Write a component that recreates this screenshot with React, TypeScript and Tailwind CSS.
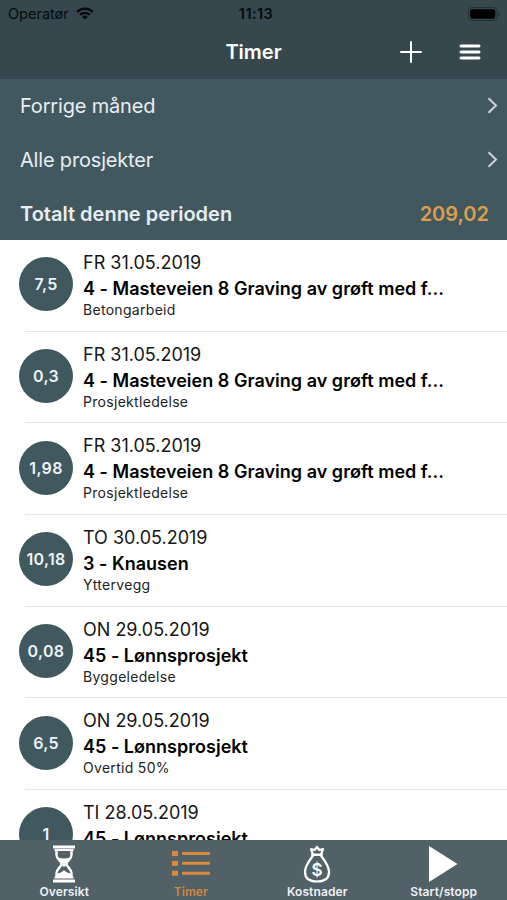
import { useState } from 'react';

type TimeEntry = {
  id: number;
  hours: string;
  date: string;
  project: string;
  activity: string;
};

const entries: TimeEntry[] = [
  { id: 1, hours: '7,5', date: 'FR 31.05.2019', project: '4 - Masteveien 8 Graving av grøft med f...', activity: 'Betongarbeid' },
  { id: 2, hours: '0,3', date: 'FR 31.05.2019', project: '4 - Masteveien 8 Graving av grøft med f...', activity: 'Prosjektledelse' },
  { id: 3, hours: '1,98', date: 'FR 31.05.2019', project: '4 - Masteveien 8 Graving av grøft med f...', activity: 'Prosjektledelse' },
  { id: 4, hours: '10,18', date: 'TO 30.05.2019', project: '3 - Knausen', activity: 'Yttervegg' },
  { id: 5, hours: '0,08', date: 'ON 29.05.2019', project: '45 - Lønnsprosjekt', activity: 'Byggeledelse' },
  { id: 6, hours: '6,5', date: 'ON 29.05.2019', project: '45 - Lønnsprosjekt', activity: 'Overtid 50%' },
  { id: 7, hours: '1', date: 'TI 28.05.2019', project: '45 - Lønnsprosjekt', activity: '' },
];

function WifiIcon() {
  return (
    <svg width="18" height="13" viewBox="0 0 18 13" fill="none" stroke="#060b0d" strokeWidth="2.4">
      <path d="M1.2 4.9a11 11 0 0 1 15.6 0" />
      <path d="M4.1 7.9a7 7 0 0 1 9.8 0" />
      <path d="M9 12.6 6.2 9.9a4 4 0 0 1 5.6 0z" fill="#060b0d" stroke="none" />
    </svg>
  );
}

function BatteryIcon() {
  return (
    <svg width="33" height="14" viewBox="0 0 33 14">
      <rect x="0.5" y="0.5" width="28.5" height="13" rx="3.5" fill="none" stroke="#223035" />
      <rect x="2.2" y="2.2" width="25" height="9.6" rx="2" fill="#000" />
      <path d="M30.5 5v4c1-.3 1.6-1 1.6-2s-.6-1.7-1.6-2z" fill="#223035" />
    </svg>
  );
}

function Chevron() {
  return (
    <svg className="mb-px" width="11" height="17" viewBox="0 0 11 17" fill="none" stroke="#cbd2dc" strokeWidth="2">
      <path d="M1.5 1.2 9 8.5l-7.5 7.3" />
    </svg>
  );
}

function HourglassIcon() {
  return (
    <svg width="24" height="38" viewBox="0 0 24 38" fill="none" stroke="#fff">
      <path d="M1 2h22M1 36h22" strokeWidth="3" />
      <path d="M2.5 5h19M2.5 32.5h19" strokeWidth="1.8" />
      <path d="M4.5 5v5c0 4.500 5 6 5 9s-5 4.500-5 9v4M19.500 5v5c0 4.500-5 6-5 9s5 4.500 5 9v4" strokeWidth="2.4" />
      <path d="M6.500 12.800c3.500.8 7.500.8 11 0-1 2.700-3.800 4-3.800 6.200v2.500h-3.400V19c0-2.200-2.800-3.500-3.800-6.200z" fill="#fff" stroke="none" />
      <path d="M4.500 32.500v-4c3 0 5.500-1.500 7.500-3.500 2 2 4.500 3.500 7.500 3.500v4z" fill="#fff" stroke="none" />
    </svg>
  );
}

function ListIcon() {
  return (
    <svg width="38" height="26" viewBox="0 0 38 26" fill="#d98a3d">
      <rect x="0" y="0" width="6" height="5" />
      <rect x="0" y="9.8" width="6" height="5" />
      <rect x="0" y="19.7" width="6" height="5" />
      <rect x="10" y="1" width="28" height="3" rx="1" />
      <rect x="10" y="10.8" width="28" height="3" rx="1" />
      <rect x="10" y="20.7" width="28" height="3" rx="1" />
    </svg>
  );
}

function MoneyBagIcon() {
  return (
    <svg width="28" height="38" viewBox="0 0 28 38" fill="none" stroke="#fff" strokeWidth="2.2" strokeLinejoin="round" strokeLinecap="round">
      <path d="M9.800 9 8 4.200l3.700.8L14 1.800 16.300 5l3.700-.8L18.200 9" />
      <path d="M9.200 9.800h9.600" strokeWidth="2.4" />
      <path d="M9.800 11C6.500 15.500 2 20.500 2 27c0 6.500 4 9.500 12 9.500S26 33.500 26 27c0-6.500-4.500-11.500-7.800-16" />
      <text x="14" y="30.5" textAnchor="middle" fontSize="17" fontWeight="600" fill="#fff" stroke="none">$</text>
    </svg>
  );
}

function PlayIcon() {
  return (
    <svg width="30" height="38" viewBox="0 0 30 38" fill="#fff">
      <path d="M0 1v36l28.500-18z" />
    </svg>
  );
}

const tabs = [
  { name: 'Oversikt', icon: <HourglassIcon /> },
  { name: 'Timer', icon: <ListIcon /> },
  { name: 'Kostnader', icon: <MoneyBagIcon /> },
  { name: 'Start/stopp', icon: <PlayIcon /> },
];

function EntryRow({ entry }: { entry: TimeEntry }) {
  return (
    <li className="h-[91.7px] shrink-0 pl-[19px]">
      <div className="flex h-full">
        <div className="mt-[17.3px] flex h-[54px] w-[54px] shrink-0 items-center justify-center rounded-full bg-[#41585f] text-base font-semibold tracking-[0.3px] text-[#edf3f8]">
          {entry.hours}
        </div>
        <div className="ml-[10px] whitespace-nowrap pt-[10px] text-black">
          <p className="text-[18px] leading-[26px] text-[#161616]">{entry.date}</p>
          <p className="text-[18px] font-semibold leading-[25px] tracking-[0.02px]">{entry.project}</p>
          <p className="text-[14px] leading-[18px] tracking-[0.3px] text-[#222]">{entry.activity}</p>
        </div>
      </div>
      <div className="-mt-px ml-[6px] h-px bg-[#e6e6e6]" />
    </li>
  );
}

export default function App() {
  const [activeTab, setActiveTab] = useState('Timer');

  return (
    <div className="flex h-[900px] w-[507px] flex-col overflow-hidden bg-white font-['Inter',sans-serif]">
      <header className="h-[79px] shrink-0 bg-[#36474d]">
        <div className="grid h-[27px] grid-cols-3 items-center pl-[8px] pr-[6px] text-[#060b0d]">
          <div className="flex items-center gap-[7px] text-[14.5px]">
            <span>Operatør</span>
            <WifiIcon />
          </div>
          <span className="pl-[3px] text-center text-[14.5px] font-semibold tracking-[0.4px]">11:13</span>
          <div className="flex justify-end">
            <BatteryIcon />
          </div>
        </div>
        <div className="grid h-[50px] grid-cols-[1fr_auto_1fr] items-center text-white">
          <span />
          <h1 className="text-[20px] font-semibold">Timer</h1>
          <div className="flex items-center justify-end gap-[37px] pr-[26px]">
            <button aria-label="Ny time">
              <svg width="22" height="22" viewBox="0 0 22 22" stroke="#fff" strokeWidth="2" strokeLinecap="round">
                <path d="M11 1v20M1 11h20" />
              </svg>
            </button>
            <button aria-label="Meny">
              <svg width="22" height="18" viewBox="0 0 22 18" stroke="#fff" strokeWidth="3" strokeLinecap="round">
                <path d="M2 3h18M2 9h18M2 15h18" />
              </svg>
            </button>
          </div>
        </div>
      </header>

      <section className="h-[161px] shrink-0 bg-[#42585f] pl-[20px] text-[20px] text-[#e8edf3]">
        <button className="flex h-[54px] w-full items-center justify-between pr-[9px] tracking-[-0.18px]">
          <span>Forrige måned</span>
          <Chevron />
        </button>
        <button className="flex h-[54px] w-full items-center justify-between pr-[9px] tracking-[-0.18px]">
          <span>Alle prosjekter</span>
          <Chevron />
        </button>
        <div className="flex h-[53px] items-center justify-between pr-[18px] font-semibold">
          <span>Totalt denne perioden</span>
          <span className="text-[#dc9d4f]">209,02</span>
        </div>
      </section>

      <ul className="flex min-h-0 flex-1 flex-col overflow-hidden">
        {entries.map((entry) => (
          <EntryRow key={entry.id} entry={entry} />
        ))}
      </ul>

      <nav className="grid h-[60px] shrink-0 grid-cols-4 bg-[#526067] pl-px">
        {tabs.map((tab) => (
          <button
            key={tab.name}
            onClick={() => setActiveTab(tab.name)}
            className={`flex flex-col items-center pt-[4px] text-[12px] font-semibold tracking-[0.1px] ${activeTab === tab.name ? 'text-[#d0873f]' : 'text-[#eef2f5]'}`}
          >
            <span className="flex h-[40px] items-center">{tab.icon}</span>
            <span className="leading-[15px]">{tab.name}</span>
          </button>
        ))}
      </nav>
    </div>
  );
}
